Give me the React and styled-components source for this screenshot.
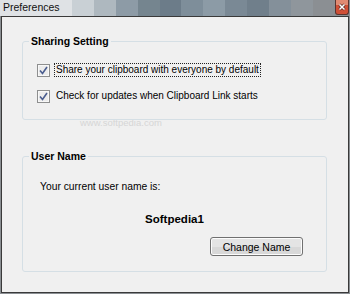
import React from 'react';
import styled, { createGlobalStyle } from 'styled-components';

const GlobalStyle = createGlobalStyle`
    html, body {
        margin: 0;
        padding: 0;
        background: #8a8d90;
    }
    body {
        font-family: "Liberation Sans", Arial, sans-serif;
        font-size: 10px;
        color: #000;
    }
`

const Window = styled.div`
    width: 350px;
    height: 294px;
    display: flex;
    flex-direction: column;
    background: ${p => p.$frame};
    font-family: "Liberation Sans", Arial, sans-serif;
    font-size: 10px;
    overflow: hidden;
`

const TitleBar = styled.div`
    height: 16px;
    display: flex;
    align-items: flex-start;
    flex-shrink: 0;
`

const TitleGlow = styled.span`
    background: ${p => p.$tone};
    padding: 0 12px 0 3px;
    height: 16px;
`

const Title = styled.span`
    font-size: 10.5px;
    color: #111;
    line-height: 15px;
`

const Band = styled.div`
    flex: ${p => p.$grow};
    height: 16px;
    background: ${p => p.$tone};
`

const CloseButton = styled.div`
    position: relative;
    z-index: 5;
    width: 14px;
    height: 15px;
    flex-shrink: 0;
    box-sizing: border-box;
    border: 1px solid #5a3530;
    border-top: none;
    border-radius: 0 0 3px 3px;
    background-color: ${p => p.$tone};
    box-shadow: inset 0 5px 0 ${p => p.$shine};
    display: flex;
    align-items: center;
    justify-content: center;
`

const Content = styled.div`
    position: relative;
    flex: 1;
    margin: 0 1px 1px 1px;
    border: 1px solid #3a3a3a;
    background: #f0f0f0;
    padding: 24px 21px 0 20px;
    display: flex;
    flex-direction: column;
    gap: 36px;
`

const Group = styled.div`
    position: relative;
    height: ${p => p.$height}px;
    box-sizing: border-box;
    border: 1px solid #d5dfe5;
    border-radius: 3px;
    display: flex;
    flex-direction: column;
    padding: ${p => p.$padding};
`

const Legend = styled.span`
    position: absolute;
    top: -8px;
    left: 6px;
    padding: 0 2px;
    background: #f0f0f0;
    font-weight: bold;
    font-size: 10.5px;
    line-height: 14px;
`

const CheckRow = styled.label`
    display: flex;
    align-items: center;
    gap: 4px;
    height: 14px;
    margin-bottom: 12px;
`

const Box = styled.span`
    width: 13px;
    height: 13px;
    box-sizing: border-box;
    border: 1px solid #8e8f8f;
    background: #ececec;
    box-shadow: inset 0 0 0 1px #f8f8f8;
    display: flex;
    align-items: center;
    justify-content: center;
`

const CheckLabel = styled.span`
    font-size: 10px;
    line-height: 12px;
    padding: 0 1px;
    border: 1px dotted ${p => (p.$focused ? '#222' : 'transparent')};
`

const Text = styled.div`
    font-size: 10.3px;
    line-height: 14px;
    padding-left: ${p => p.$indent || 0}px;
    text-align: ${p => p.$align || 'left'};
`

const UserName = styled(Text)`
    font-weight: bold;
    font-size: 11.5px;
    margin-top: 18px;
`

const ButtonRow = styled.div`
    display: flex;
    justify-content: flex-end;
    padding-right: 23px;
    margin-top: 11px;
`

const Button = styled.button`
    width: 93px;
    height: 19px;
    padding: 0;
    font-family: "Liberation Sans", Arial, sans-serif;
    font-size: 10.5px;
    color: #000;
    border: 1px solid #707070;
    border-radius: 3px;
    background: #e4e4e4;
    box-shadow: inset 0 0 0 1px #fcfcfc, inset 0 -8px 0 #d8d8d8;
`

const Watermark = styled.span`
    position: absolute;
    left: 78px;
    top: 100px;
    font-size: 9.5px;
    color: #d6d6d6;
    pointer-events: none;
`

const Check = () => (
    <svg width="9" height="9" viewBox="0 0 9 9">
        <path d="M1 4.5 L3.5 7.5 L8 1" fill="none" stroke="#4a5d8f" strokeWidth="1.6" />
    </svg>
)

const CloseGlyph = () => (
    <svg width="8" height="8" viewBox="0 0 8 8">
        <path d="M1.5 1.5 L6.5 6.5 M6.5 1.5 L1.5 6.5" stroke="#5a2a22" strokeWidth="3" />
        <path d="M1.5 1.5 L6.5 6.5 M6.5 1.5 L1.5 6.5" stroke="#fff" strokeWidth="1.5" />
    </svg>
)

const options = [
    { label: 'Share your clipboard with everyone by default', focused: true },
    { label: 'Check for updates when Clipboard Link starts', focused: false },
]

// blurred aero glass behind the title, sampled left to right
const glass = [
    '#c9d0d5', '#aeb8bf', '#8d9ba6', '#75858f', '#6c7c89', '#7e8e9a',
    '#8c9ba6', '#7a8995', '#707f8b', '#84909a', '#8f969c', '#8b8f93',
]

export default function App() {
    return (
        <>
            <GlobalStyle />
            <Window $frame="#8b8f93">
                <TitleBar>
                    <TitleGlow $tone="#dfe2e5">
                        <Title>Preferences</Title>
                    </TitleGlow>
                    {glass.map((tone, i) => <Band key={i} $tone={tone} $grow={1} />)}
                    <CloseButton $tone="#cf4f36" $shine="#e08a72">
                        <CloseGlyph />
                    </CloseButton>
                    <Band $tone="#8b8f93" $grow={0.03} />
                </TitleBar>
                <Content>
                    <Watermark>www.softpedia.com</Watermark>
                    <Group $height={79} $padding="21px 0 0 14px">
                        <Legend>Sharing Setting</Legend>
                        {options.map(o => (
                            <CheckRow key={o.label}>
                                <Box><Check /></Box>
                                <CheckLabel $focused={o.focused}>{o.label}</CheckLabel>
                            </CheckRow>
                        ))}
                    </Group>
                    <Group $height={116} $padding="23px 0 0 0">
                        <Legend>User Name</Legend>
                        <Text $indent={17}>Your current user name is:</Text>
                        <UserName $align="center">Softpedia1</UserName>
                        <ButtonRow>
                            <Button>Change Name</Button>
                        </ButtonRow>
                    </Group>
                </Content>
            </Window>
        </>
    );
}
